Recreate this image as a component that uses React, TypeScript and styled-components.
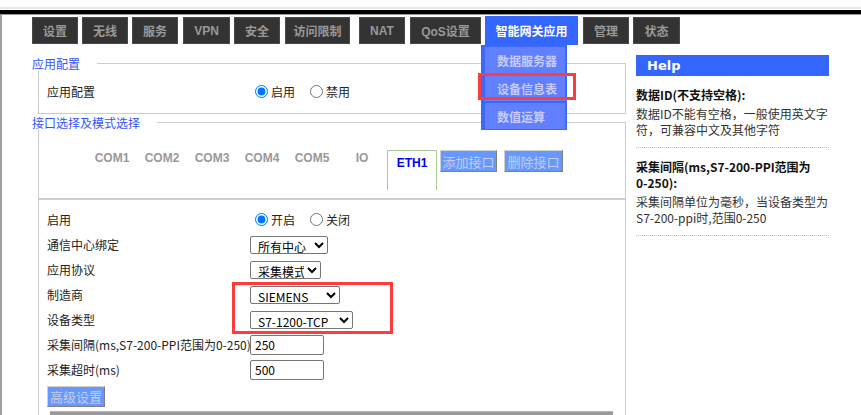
import React from "react";
import styled, { createGlobalStyle } from "styled-components";

const Global = createGlobalStyle`
  html, body { margin: 0; padding: 0; background: #fff; }
  body {
    font-family: "Noto Sans CJK SC", "Noto Sans", sans-serif;
    font-size: 12px;
    color: #222;
  }
  * { box-sizing: border-box; }
`;

const CJK = `"Noto Sans CJK SC", "Noto Sans", sans-serif`;
const LATIN_CJK = `"Liberation Sans", "Noto Sans CJK SC", sans-serif`;

const TopBar = styled.div`
  margin-top: 7px;
  height: 8px;
  border-top: 2px solid #e6e6e6;
  border-bottom: 1px solid #9a9a9a;
  padding-top: 1px;
  background: #000;
  background-clip: content-box;
`;

const Frame = styled.div`
  position: relative;
  border-left: 2px solid #a0a0a0;
  padding-left: 30px;
  height: 400px;
  overflow: hidden;
`;

const Nav = styled.nav`
  display: flex;
  align-items: flex-start;
  margin-top: 2px;
  height: 27px;
  position: relative;
  z-index: 5;
`;

const NavTab = styled.div<{ $w: number; $gap: number; $active?: boolean }>`
  position: relative;
  width: ${(p) => p.$w}px;
  margin-left: ${(p) => p.$gap}px;
  height: ${(p) => (p.$active ? 29 : 27)}px;
  margin-top: ${(p) => (p.$active ? -1 : 0)}px;
  background: ${(p) => (p.$active ? "#3366ff" : "#333")};
  border: 1px solid ${(p) => (p.$active ? "#3366ff" : "#4a4a4a")};
  color: ${(p) => (p.$active ? "#fff" : "#999")};
  font: bold 12px ${LATIN_CJK};
  display: flex;
  align-items: center;
  justify-content: center;
  white-space: nowrap;
`;

const Menu = styled.div`
  position: absolute;
  left: -5px;
  top: 28px;
  width: 86px;
  background: #3d66ff;
  padding: 2px 2px 1px 4px;
  display: flex;
  flex-direction: column;
  gap: 2px;
`;

const MenuItem = styled.div`
  height: 26px;
  background: #6080ff;
  color: #c8ccff;
  font: bold 12px ${CJK};
  padding-left: 12px;
  display: flex;
  align-items: center;
  white-space: nowrap;
`;

const RedMark = styled.div<{ $l: number; $t: number; $w: number; $h: number }>`
  position: absolute;
  left: ${(p) => p.$l}px;
  top: ${(p) => p.$t}px;
  width: ${(p) => p.$w}px;
  height: ${(p) => p.$h}px;
  border: 3px solid #ff3b3b;
  pointer-events: none;
  z-index: 6;
`;

const Main = styled.div`
  display: flex;
  align-items: flex-start;
  gap: 10px;
`;

const LeftCol = styled.div`
  width: 594px;
  padding-top: 12px;
`;

const Section = styled.section<{ $mt?: number }>`
  margin-top: ${(p) => p.$mt ?? 0}px;
`;

const SectionHead = styled.div`
  display: flex;
  height: 15px;
`;

const SectionTitle = styled.div`
  color: #3355ff;
  font: 12px ${CJK};
  line-height: 15px;
  white-space: nowrap;
`;

const Rule = styled.div`
  flex: 1;
  margin-left: 17px;
  margin-top: 7px;
  height: 8px;
  border-top: 1px solid #ccc;
  border-right: 1px solid #ccc;
`;

const SectionBody = styled.div<{ $pad?: string; $tall?: boolean }>`
  margin-left: 6px;
  border: 1px solid #ccc;
  border-top: none;
  padding: ${(p) => p.$pad ?? "0"};
  min-height: ${(p) => (p.$tall ? "400px" : "0")};
`;

const Row = styled.div`
  display: grid;
  grid-template-columns: 203px 1fr;
  height: 24px;
  align-items: center;
`;

const Label = styled.div`
  color: #222;
  white-space: nowrap;
  font: 12px ${CJK};
`;

const Controls = styled.div`
  display: flex;
  align-items: center;
`;

const RadioOption = styled.label`
  display: inline-flex;
  align-items: center;
  margin-right: 10px;
  font: 12px ${CJK};
  color: #222;
  input {
    margin: 0 3px 0 5px;
    width: 13px;
    height: 13px;
  }
`;

const TabBar = styled.div`
  display: flex;
  align-items: flex-start;
  padding: 20px 0 8px 48px;
  border-bottom: 2px solid #ccc;
`;

const IfTab = styled.div<{ $active?: boolean }>`
  width: 50px;
  height: 40px;
  text-align: center;
  font: bold 12px "Liberation Sans", sans-serif;
  line-height: 16px;
  color: ${(p) => (p.$active ? "#0000ff" : "#999")};
  padding-top: ${(p) => (p.$active ? 4 : 0)}px;
  border: ${(p) => (p.$active ? "1px solid #a8c898" : "none")};
  border-bottom: none;
`;

const ActionButton = styled.button<{ $w: number; $ml: number; $h?: number }>`
  width: ${(p) => p.$w}px;
  height: ${(p) => p.$h ?? 22}px;
  margin-left: ${(p) => p.$ml}px;
  padding: 0;
  background: #6699ff;
  color: #c8cde8;
  font: 13px ${CJK};
  border: 1px solid;
  border-color: #d0d0d0 #808080 #808080 #d0d0d0;
  white-space: nowrap;
`;

const Form = styled.div`
  position: relative;
  padding: 7px 0 0 8px;
`;

const FormGrid = styled.div`
  display: grid;
  grid-template-columns: 203px 1fr;
  grid-auto-rows: 25px;
  align-items: center;
`;

const Select = styled.select<{ $w: number }>`
  width: ${(p) => p.$w}px;
  height: 18px;
  font: 12px ${CJK};
  color: #000;
  background: #fff;
  border: 1px solid #767676;
  border-radius: 2px;
  padding: 0 0 0 3px;
`;

const TextInput = styled.input`
  width: 74px;
  height: 20px;
  font: 12px ${CJK};
  color: #000;
  border: 1px solid #767676;
  border-radius: 2px;
  padding: 0 4px;
`;

const AdvRow = styled.div`
  margin-top: 4px;
`;

const BottomBar = styled.div`
  margin: 4px 0 0 3px;
  width: 563px;
  height: 6px;
  background: #999;
  border-top: 1px solid #b5b5b5;
`;

const Help = styled.aside`
  width: 193px;
  margin-top: 11px;
`;

const HelpHeader = styled.div`
  height: 21px;
  background: #3366ff;
  color: #fff;
  font: bold 13px "DejaVu Sans", sans-serif;
  padding-left: 11px;
  display: flex;
  align-items: center;
`;

const HelpSection = styled.div`
  padding: 11px 0 9px;
  border-bottom: 1px dotted #bbb;
`;

const HelpTitle = styled.div`
  font: bold 12px ${CJK};
  line-height: 16px;
  color: #111;
  margin-bottom: 3px;
  white-space: nowrap;
`;

const HelpText = styled.div`
  font: 12px ${CJK};
  line-height: 16px;
  color: #333;
  white-space: nowrap;
`;

const navTabs = [
  { t: "设置", w: 46, g: 0 },
  { t: "无线", w: 46, g: 4 },
  { t: "服务", w: 46, g: 4 },
  { t: "VPN", w: 47, g: 5 },
  { t: "安全", w: 46, g: 4 },
  { t: "访问限制", w: 65, g: 5 },
  { t: "NAT", w: 46, g: 9 },
  { t: "QoS设置", w: 71, g: 5 },
  { t: "智能网关应用", w: 93, g: 4, active: true },
  { t: "管理", w: 46, g: 5 },
  { t: "状态", w: 47, g: 4 },
];

const ifTabs = ["COM1", "COM2", "COM3", "COM4", "COM5", "IO"];

export default function App() {
  return (
    <>
      <Global />
      <TopBar />
      <Frame>
        <Nav>
          {navTabs.map((n) => (
            <NavTab key={n.t} $w={n.w} $gap={n.g} $active={n.active}>
              {n.t}
              {n.active && (
                <Menu>
                  <MenuItem>数据服务器</MenuItem>
                  <MenuItem>设备信息表</MenuItem>
                  <MenuItem>数值运算</MenuItem>
                  <RedMark $l={-3} $t={28} $w={98} $h={27} />
                </Menu>
              )}
            </NavTab>
          ))}
        </Nav>
        <Main>
          <LeftCol>
            <Section>
              <SectionHead>
                <SectionTitle>应用配置</SectionTitle>
                <Rule />
              </SectionHead>
              <SectionBody $pad="8px 0 10px 8px">
                <Row>
                  <Label>应用配置</Label>
                  <Controls>
                    <RadioOption>
                      <input type="radio" name="app" defaultChecked />
                      启用
                    </RadioOption>
                    <RadioOption>
                      <input type="radio" name="app" />
                      禁用
                    </RadioOption>
                  </Controls>
                </Row>
              </SectionBody>
            </Section>
            <Section $mt={1}>
              <SectionHead>
                <SectionTitle>接口选择及模式选择</SectionTitle>
                <Rule />
              </SectionHead>
              <SectionBody $tall>
                <TabBar>
                  {ifTabs.map((t) => (
                    <IfTab key={t}>{t}</IfTab>
                  ))}
                  <IfTab $active>ETH1</IfTab>
                  <ActionButton $w={57} $ml={3}>添加接口</ActionButton>
                  <ActionButton $w={59} $ml={7}>删除接口</ActionButton>
                </TabBar>
                <Form>
                  <FormGrid>
                    <Label>启用</Label>
                    <Controls>
                      <RadioOption>
                        <input type="radio" name="en" defaultChecked />
                        开启
                      </RadioOption>
                      <RadioOption>
                        <input type="radio" name="en" />
                        关闭
                      </RadioOption>
                    </Controls>
                    <Label>通信中心绑定</Label>
                    <Controls>
                      <Select $w={78} defaultValue="all">
                        <option value="all">所有中心</option>
                      </Select>
                    </Controls>
                    <Label>应用协议</Label>
                    <Controls>
                      <Select $w={71} defaultValue="collect">
                        <option value="collect">采集模式</option>
                      </Select>
                    </Controls>
                    <Label>制造商</Label>
                    <Controls>
                      <Select $w={90} defaultValue="siemens">
                        <option value="siemens">SIEMENS</option>
                      </Select>
                    </Controls>
                    <Label>设备类型</Label>
                    <Controls>
                      <Select $w={103} defaultValue="s7">
                        <option value="s7">S7-1200-TCP</option>
                      </Select>
                    </Controls>
                    <Label>采集间隔(ms,S7-200-PPI范围为0-250)</Label>
                    <Controls>
                      <TextInput defaultValue="250" />
                    </Controls>
                    <Label>采集超时(ms)</Label>
                    <Controls>
                      <TextInput defaultValue="500" />
                    </Controls>
                  </FormGrid>
                  <AdvRow>
                    <ActionButton $w={58} $ml={0} $h={21}>高级设置</ActionButton>
                  </AdvRow>
                  <BottomBar />
                  <RedMark $l={193} $t={82} $w={161} $h={52} />
                </Form>
              </SectionBody>
            </Section>
          </LeftCol>
          <Help>
            <HelpHeader>Help</HelpHeader>
            <HelpSection>
              <HelpTitle>数据ID(不支持空格):</HelpTitle>
              <HelpText>
                数据ID不能有空格，一般使用英文字
                <br />
                符，可兼容中文及其他字符
              </HelpText>
            </HelpSection>
            <HelpSection>
              <HelpTitle>
                采集间隔(ms,S7-200-PPI范围为
                <br />
                0-250):
              </HelpTitle>
              <HelpText>
                采集间隔单位为毫秒，当设备类型为
                <br />
                S7-200-ppi时,范围0-250
              </HelpText>
            </HelpSection>
          </Help>
        </Main>
      </Frame>
    </>
  );
}
